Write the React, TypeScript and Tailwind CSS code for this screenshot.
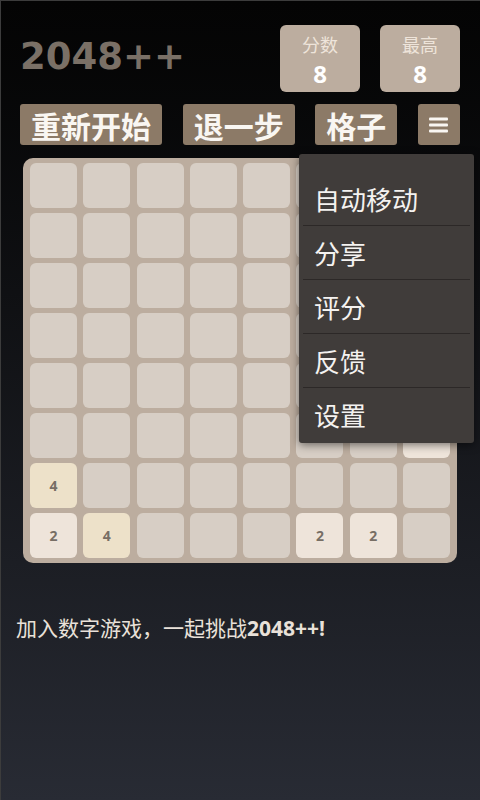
const cjk = { fontFamily: '"Noto Sans CJK SC", "Noto Sans", sans-serif' }

type Cell = 0 | 2 | 4

const board: Cell[][] = [
  [0, 0, 0, 0, 0, 0, 0, 0],
  [0, 0, 0, 0, 0, 0, 0, 0],
  [0, 0, 0, 0, 0, 0, 0, 0],
  [0, 0, 0, 0, 0, 0, 0, 0],
  [0, 0, 0, 0, 0, 0, 0, 0],
  [0, 0, 0, 0, 0, 0, 0, 2],
  [4, 0, 0, 0, 0, 0, 0, 0],
  [2, 4, 0, 0, 0, 2, 2, 0],
]

const menuItems = ['自动移动', '分享', '评分', '反馈', '设置']

function Tile({ value }: { value: Cell }) {
  const bg = value === 2 ? 'bg-[#eee4da]' : value === 4 ? 'bg-[#ede1c9]' : 'bg-[#d7cec5]'
  return (
    <div
      className={`h-[45px] rounded-[6px] ${bg} flex items-center justify-center text-[#776e65] text-[14px] font-bold`}
      style={{ fontFamily: '"Open Sans", sans-serif' }}
    >
      {value !== 0 ? value : null}
    </div>
  )
}

function ScoreBox({ label, value }: { label: string; value: number }) {
  return (
    <div className="w-[80px] h-[67px] rounded-[6px] bg-[#bcad9f] flex flex-col items-center pt-[6px]">
      <span className="text-[18px] leading-[26px] text-[#eee4da]" style={cjk}>
        {label}
      </span>
      <span
        className="mt-[3px] text-[24px] leading-[28px] font-bold text-white"
        style={{ fontFamily: '"Open Sans", sans-serif' }}
      >
        {value}
      </span>
    </div>
  )
}

function Button({ label, width }: { label: string; width: string }) {
  return (
    <div
      className={`${width} h-[41px] rounded-[3px] bg-[#8c7a67] flex items-center justify-center text-[30px] leading-none font-bold text-[#f9f6f2]`}
      style={cjk}
    >
      {label}
    </div>
  )
}

export default function App() {
  return (
    <div className="relative w-[480px] h-[800px] overflow-hidden border-t border-l border-[#3c3c3c] bg-gradient-to-b from-[#040404] to-[#282b34]">
      <div className="flex items-center justify-between pt-[24px] pl-[19px] pr-[20px]">
        <span
          className="text-[37px] font-bold text-[#7a7066] leading-none mb-[5px]"
          style={{ fontFamily: '"DejaVu Sans", sans-serif' }}
        >
          2048++
        </span>
        <div className="flex gap-[20px]">
          <ScoreBox label="分数" value={8} />
          <ScoreBox label="最高" value={8} />
        </div>
      </div>

      <div className="flex justify-between mt-[12px] pl-[19px] pr-[20px]">
        <Button label="重新开始" width="w-[142px]" />
        <Button label="退一步" width="w-[112px]" />
        <Button label="格子" width="w-[82px]" />
        <div className="w-[42px] h-[41px] rounded-[3px] bg-[#8c7a67] flex items-center justify-center">
          <svg width="19" height="16" viewBox="0 0 19 16">
            <rect x="0" y="0.5" width="19" height="3" rx="1" fill="#f9f6f2" />
            <rect x="0" y="6.5" width="19" height="3" rx="1" fill="#f9f6f2" />
            <rect x="0" y="12.5" width="19" height="3" rx="1" fill="#f9f6f2" />
          </svg>
        </div>
      </div>

      <div className="ml-[22px] mt-[13px] w-[434px] rounded-[10px] bg-[#bcad9f] px-[7px] py-[5px] grid grid-cols-8 gap-x-[6.4px] gap-y-[5px]">
        {board.flat().map((v, i) => (
          <Tile key={i} value={v} />
        ))}
      </div>

      <p className="mt-[52px] pl-[15px] text-[21px] leading-[24px] text-[#e9e1d9]" style={cjk}>
        加入数字游戏，一起挑战
        <span className="font-bold" style={{ fontFamily: '"Open Sans", sans-serif' }}>
          2048++!
        </span>
      </p>

      <div className="absolute left-[298px] top-[153px] w-[175px] h-[289px] rounded-[3px] bg-[#403c3a] shadow-[0_2px_8px_rgba(0,0,0,0.5)] pt-[18px]">
        {menuItems.map((item, i) => (
          <div key={item}>
            <div className="h-[53px] flex items-center pl-[15px] text-[26px] text-[#f4f2f0]" style={cjk}>
              {item}
            </div>
            {i < menuItems.length - 1 && <div className="mx-[4px] h-px bg-[#2c2827]" />}
          </div>
        ))}
      </div>
    </div>
  )
}
